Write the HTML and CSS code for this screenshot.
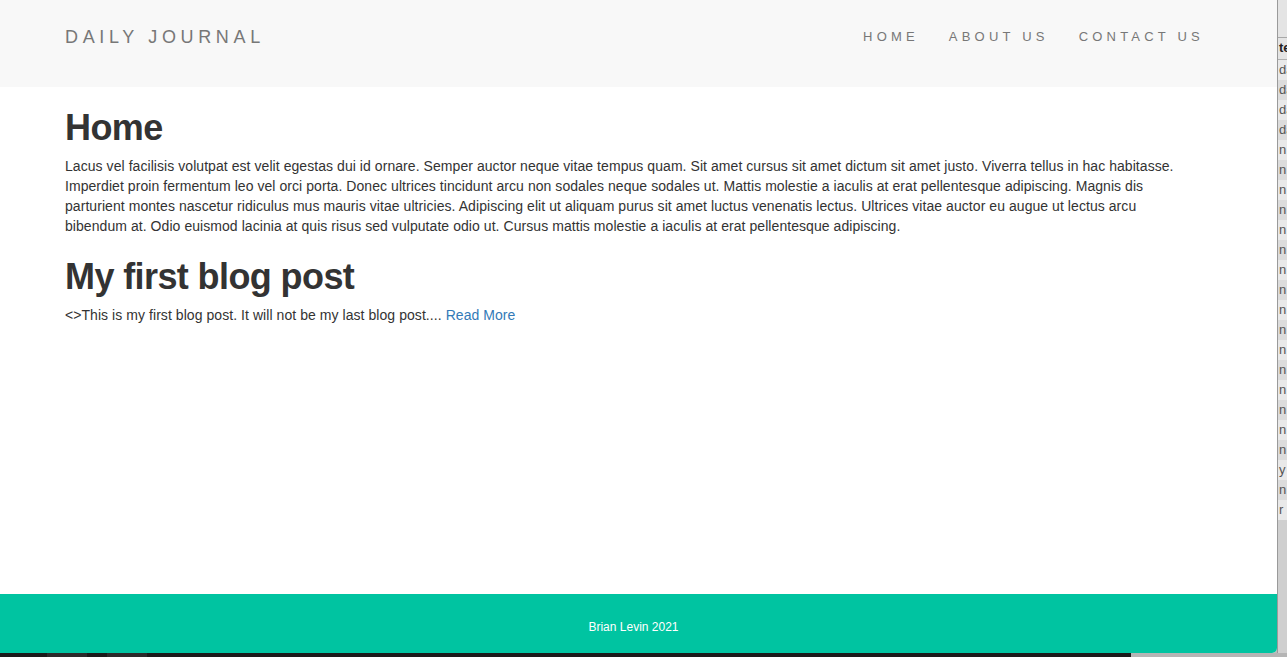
FILE: index.html
```html
<!DOCTYPE html>
<html lang="en">
<head>
<meta charset="utf-8">
<title>Daily Journal</title>
<link rel="stylesheet" href="styles.css">
</head>
<body>
<div class="desktop">
  <div class="window">
    <header class="navbar">
      <a class="brand" href="#">DAILY JOURNAL</a>
      <nav class="nav">
        <a href="#">HOME</a>
        <a href="#">ABOUT US</a>
        <a href="#">CONTACT US</a>
      </nav>
    </header>
    <main class="content">
      <h1 class="title">Home</h1>
      <p class="text">Lacus vel facilisis volutpat est velit egestas dui id ornare. Semper auctor neque vitae tempus quam. Sit amet cursus sit amet dictum sit amet justo. Viverra tellus in hac habitasse. Imperdiet proin fermentum leo vel orci porta. Donec ultrices tincidunt arcu non sodales neque sodales ut. Mattis molestie a iaculis at erat pellentesque adipiscing. Magnis dis parturient montes nascetur ridiculus mus mauris vitae ultricies. Adipiscing elit ut aliquam purus sit amet luctus venenatis lectus. Ultrices vitae auctor eu augue ut lectus arcu bibendum at. Odio euismod lacinia at quis risus sed vulputate odio ut. Cursus mattis molestie a iaculis at erat pellentesque adipiscing.</p>
      <h1 class="title title-post">My first blog post</h1>
      <p class="text">&lt;&gt;This is my first blog post. It will not be my last blog post.... <a class="more" href="#">Read More</a></p>
    </main>
    <footer class="footer">
      <p class="copy">Brian Levin 2021</p>
    </footer>
  </div>
  <aside class="behind">
    <div class="behind-top"></div>
    <div class="row head">te</div>
    <div class="row">da</div>
    <div class="row alt">da</div>
    <div class="row">da</div>
    <div class="row alt">da</div>
    <div class="row">n S</div>
    <div class="row alt">n S</div>
    <div class="row">n S</div>
    <div class="row alt">n T</div>
    <div class="row">n T</div>
    <div class="row alt">n T</div>
    <div class="row">n T</div>
    <div class="row alt">n T</div>
    <div class="row">n T</div>
    <div class="row alt">n T</div>
    <div class="row">n T</div>
    <div class="row alt">n T</div>
    <div class="row">n T</div>
    <div class="row alt">n T</div>
    <div class="row">n T</div>
    <div class="row alt">n T</div>
    <div class="row">y</div>
    <div class="row alt">n</div>
    <div class="row">r</div>
  </aside>
</div>
<div class="dock">
  <div class="dock-dark">
    <span class="dock-tab"></span>
    <span class="dock-tab"></span>
  </div>
  <div class="dock-grey"></div>
</div>
</body>
</html>
```

FILE: styles.css
```css
* { box-sizing: border-box; }

html, body {
  margin: 0;
  padding: 0;
}

body {
  width: 1287px;
  height: 657px;
  overflow: hidden;
  background: #bcbcbc;
  font-family: "Liberation Sans", Arial, Helvetica, sans-serif;
  font-size: 14px;
  line-height: 20px;
  color: #333333;
}

.desktop {
  display: flex;
  height: 653px;
}

.window {
  width: 1277px;
  flex: 0 0 1277px;
  height: 653px;
  display: flex;
  flex-direction: column;
  background: #ffffff;
  border-bottom-right-radius: 5px;
  overflow: hidden;
}

.navbar {
  height: 87px;
  flex: 0 0 87px;
  background: #f8f8f8;
  display: flex;
  justify-content: space-between;
  align-items: flex-start;
  padding: 27px 73px 0 65px;
}

.brand {
  font-size: 18px;
  line-height: 20px;
  letter-spacing: 4.65px;
  color: #777777;
  text-decoration: none;
  white-space: nowrap;
}

.nav {
  display: flex;
  gap: 30px;
}

.nav a {
  font-size: 13px;
  line-height: 20px;
  letter-spacing: 4.2px;
  color: #777777;
  text-decoration: none;
  white-space: nowrap;
}

.content {
  padding: 0 65px;
  flex: 1 1 auto;
}

.title {
  font-size: 36px;
  line-height: 39px;
  font-weight: bold;
  letter-spacing: -0.6px;
  margin: 21px 0 9px;
  color: #333333;
}

.title-post {
  margin-top: 21px;
}

.text {
  margin: 0;
  max-width: 1120px;
  letter-spacing: 0.06px;
}

.more {
  color: #337ab7;
  text-decoration: none;
}

.footer {
  height: 59px;
  flex: 0 0 59px;
  background: #00c4a1;
  display: flex;
  justify-content: center;
  padding: 26px 10px 0 0;
}

.copy {
  margin: 0;
  font-size: 12px;
  line-height: 14px;
  color: #ffffff;
}

.behind {
  flex: 1 1 auto;
  background: #cfcfcf;
  border-left: 1px solid #9a9a9a;
  overflow: hidden;
  font-size: 13px;
  line-height: 19px;
  color: #555555;
  white-space: nowrap;
}

.behind-top {
  height: 38px;
  background: #e4e4e4;
  border-bottom: 1px solid #a8a8a8;
}

.row {
  height: 20px;
  line-height: 20px;
  padding-left: 1px;
  background: #e9e9e9;
}

.row.alt {
  background: #dcdcdc;
}

.row.head {
  font-weight: bold;
  color: #222222;
  background: #e4e4e4;
  border-bottom: 1px solid #b0b0b0;
  height: 22px;
}

.dock {
  display: flex;
  height: 4px;
}

.dock-dark {
  width: 1131px;
  background: #1b1a1a;
  display: flex;
  gap: 20px;
  padding-left: 47px;
}

.dock-tab {
  width: 40px;
  background: #2b2a2a;
}

.dock-grey {
  flex: 1 1 auto;
  background: #b5b5b5;
}
```
